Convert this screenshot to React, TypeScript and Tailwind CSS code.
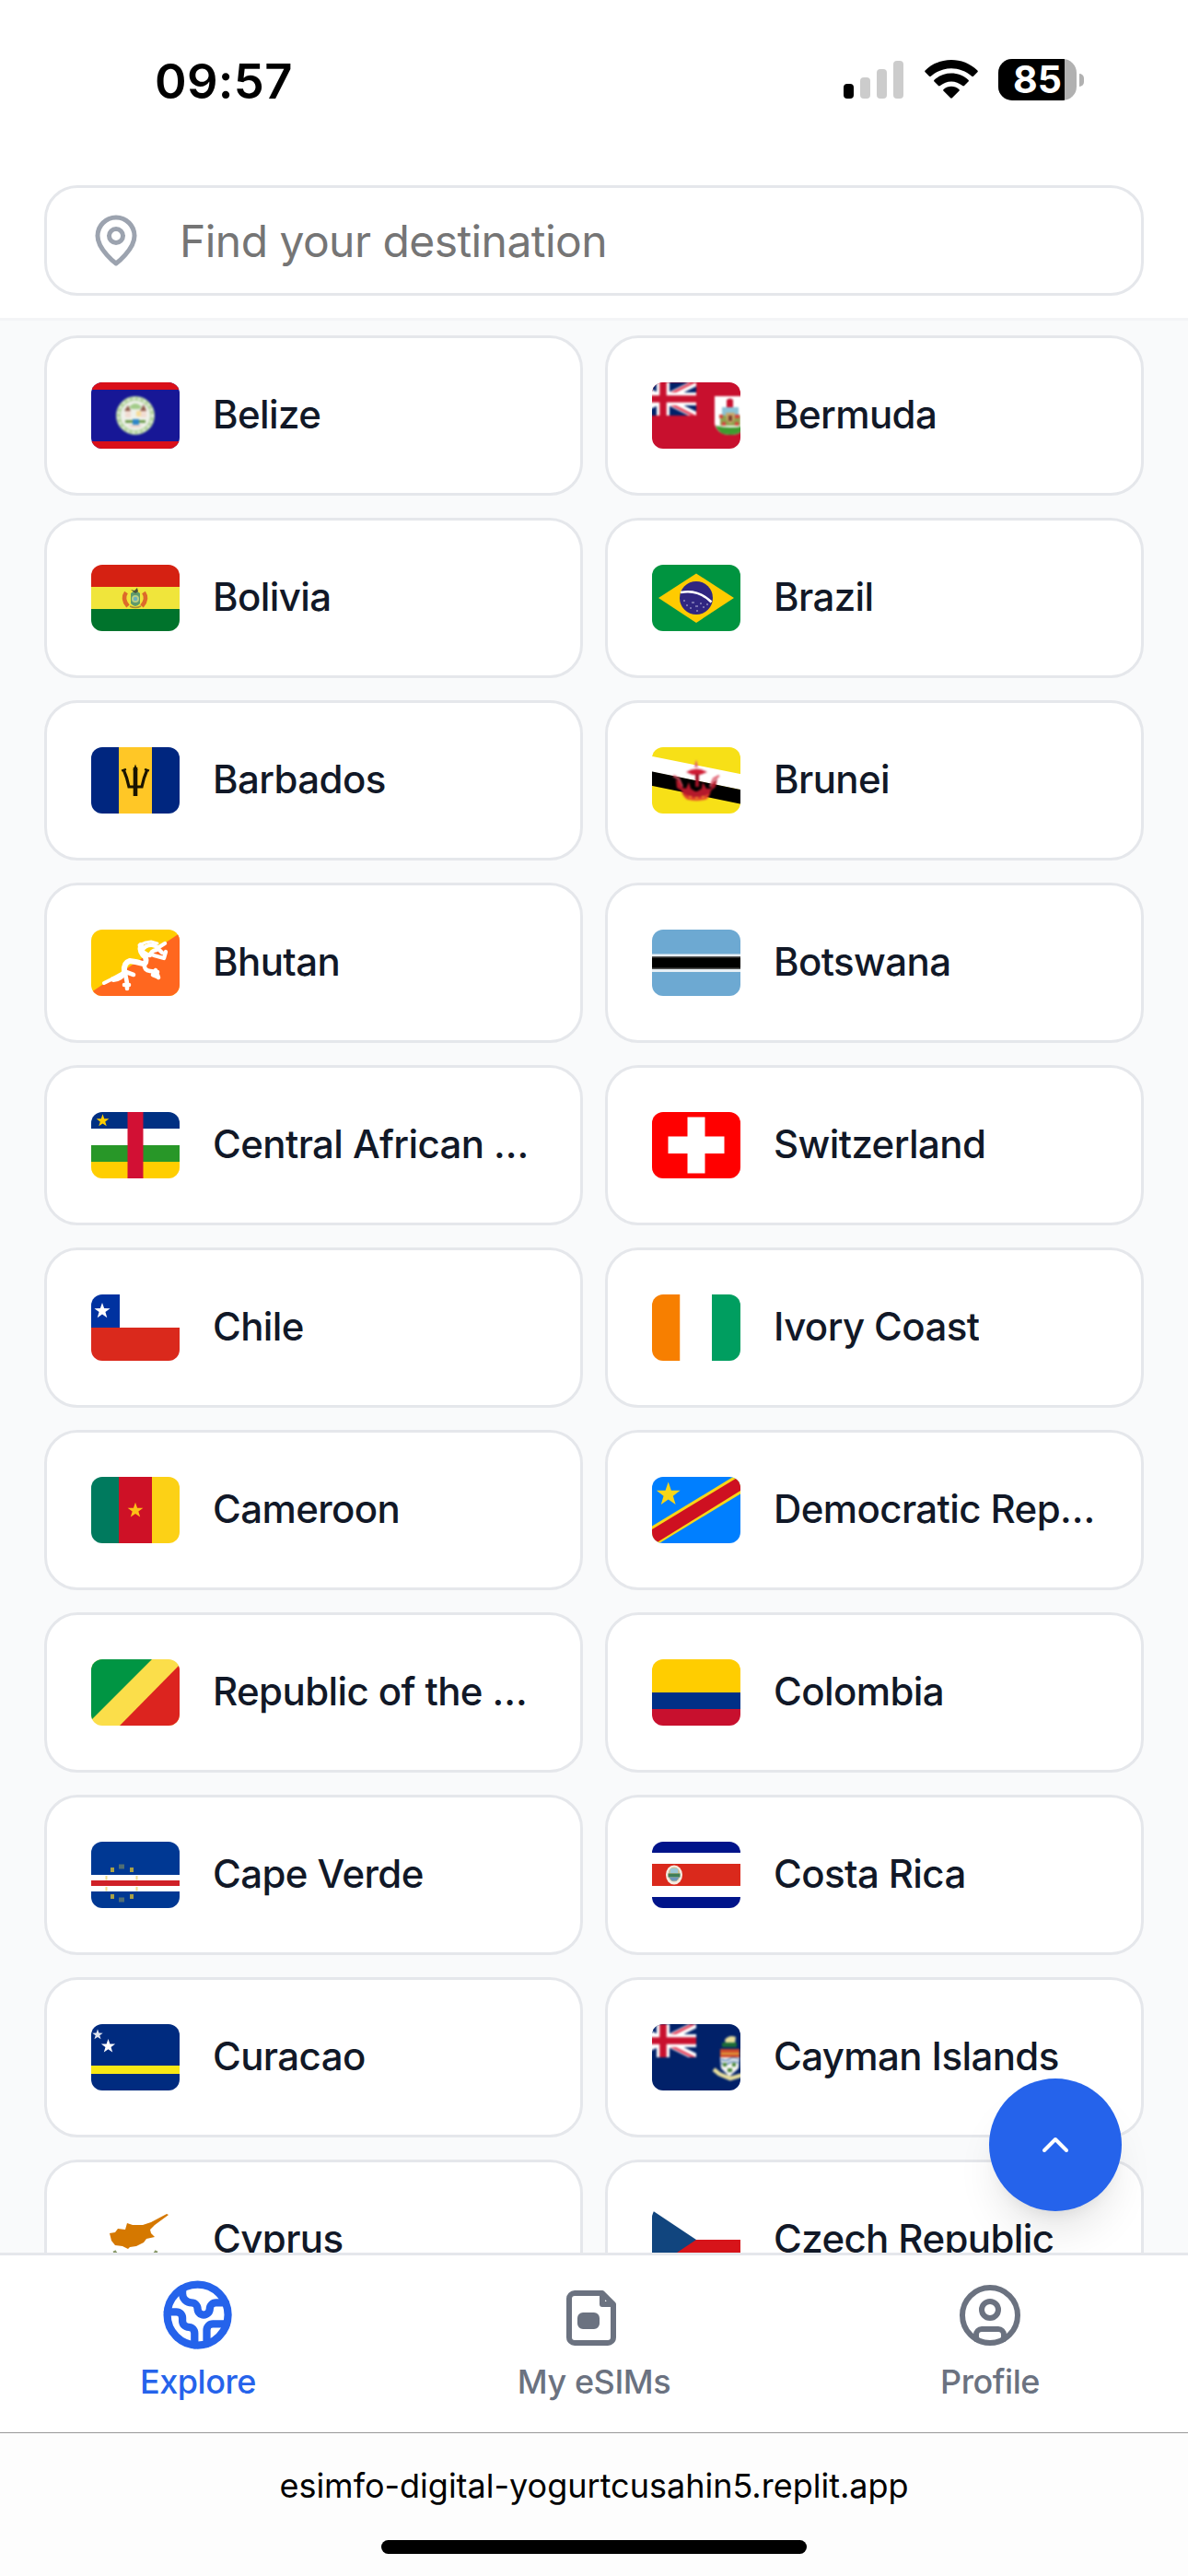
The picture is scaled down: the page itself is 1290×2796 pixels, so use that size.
import type { ReactNode } from "react";
import { ChevronUp, CircleUser, Earth } from "lucide-react";

function starPoints(cx: number, cy: number, r: number) {
  const pts: string[] = [];
  for (let i = 0; i < 10; i++) {
    const rad = i % 2 === 0 ? r : r * 0.4;
    const a = (Math.PI / 5) * i - Math.PI / 2;
    pts.push(`${(cx + rad * Math.cos(a)).toFixed(2)},${(cy + rad * Math.sin(a)).toFixed(2)}`);
  }
  return pts.join(" ");
}

function Star({ cx, cy, r, fill }: { cx: number; cy: number; r: number; fill: string }) {
  return <polygon points={starPoints(cx, cy, r)} fill={fill} className="blur-[0.5px]" />;
}

/* Horizontal or vertical bands: [start, size, colour] */
function Bands({ items, vertical }: { items: [number, number, string][]; vertical?: boolean }) {
  return (
    <>
      {items.map(([start, size, fill], i) =>
        vertical ? (
          <rect key={i} x={start} y={0} width={size} height={72} fill={fill} />
        ) : (
          <rect key={i} x={0} y={start} width={96} height={size} fill={fill} />
        ),
      )}
    </>
  );
}

function UnionJack() {
  return (
    <svg x={-24} y={0} width={72} height={36} viewBox="0 0 72 36">
      <rect width={72} height={36} fill="#012169" />
      <path d="M0 0 72 36M72 0 0 36" stroke="#fff" strokeWidth={7.5} />
      <path d="M36 19.5 72 37.5M36 16.5 72 -1.5" stroke="#e4405a" strokeWidth={2.8} />
      <path d="M36 0V36M0 18H72" stroke="#fff" strokeWidth={14} />
      <path d="M36 0V36M0 18H72" stroke="#c8102e" strokeWidth={7.5} />
    </svg>
  );
}

const flags: Record<string, ReactNode> = {
  bz: (
    <>
      <Bands items={[[0, 72, "#171796"], [0, 8, "#d90f19"], [64, 8, "#d90f19"]]} />
      <g className="blur-[0.8px]">
        <circle cx={48} cy={36} r={18.5} fill="#eef1ea" stroke="#b5d3a0" strokeWidth={5} />
        <circle cx={48} cy={36} r={18.5} fill="none" stroke="#e6efe0" strokeWidth={3} strokeDasharray="2 4" />
        <path d="M41 27q7-8 14 0l-3 2h-8z" fill="#a3cc8a" />
        <path d="M36 31l4-6 3 6zM53 31l4-7 3 7z" fill="#8d5a4a" />
        <path d="M37 31h6v7h-6zM54 31h6v7h-6z" fill="#f1dcd2" />
        <path d="M49 31h5v6h-5z" fill="#f7dc9a" />
        <path d="M37 41h22v3H37z" fill="#6f9c4e" />
        <path d="M45 40h7v6h-7z" fill="#2d86c9" />
        <path d="M40 46h16l-4 3h-8z" fill="#e8d3cb" />
      </g>
    </>
  ),
  bm: (
    <>
      <rect width={96} height={72} fill="#c8102e" />
      <g className="blur-[0.8px]">
        <UnionJack />
        <path d="M68 15h34v30q-3 12-17 12t-17-12z" fill="#fff" />
        <path d="M69 47q16 4 32 0-3 10-16 10t-16-10z" fill="#3f9a2f" />
        <path d="M81 19q4-3 7 0v8h-7z" fill="#c8102e" />
        <path d="M76 27h18v10H76z" fill="#8cc3d6" />
        <path d="M74 36h22v11H74z" fill="#8fa24d" />
        <path d="M73 35h4v4h-4zM90 35h5v4h-5zM76 43h4v4h-4zM90 43h4v4h-4z" fill="#d3473f" />
        <path d="M80 33h10l-1 8-4 4-4-4z" fill="#c9a86a" />
        <path d="M83 36h4v6h-4z" fill="#7b3f2d" />
      </g>
    </>
  ),
  bo: (
    <>
      <Bands items={[[0, 24, "#d52112"], [24, 24, "#f0e53b"], [48, 24, "#00732c"]]} />
      <g className="blur-[0.7px]">
        <path d="M38 30q-5 7 2 15M57 30q5 7-2 15" fill="none" stroke="#dd6a2a" strokeWidth={4.5} />
        <path d="M43 31q5-5 10 0v11q-5 6-10 0z" fill="#5f9a6c" />
        <circle cx={48} cy={37} r={4} fill="#b9cf86" />
        <circle cx={48} cy={37} r={2.2} fill="#6bb0bb" />
        <path d="M43 27l4 1 3-3 1 4-3 2z" fill="#4d5238" />
        <path d="M42 45q6 3 12 0" stroke="#a78f35" strokeWidth={1.6} fill="none" />
      </g>
    </>
  ),
  br: (
    <>
      <rect width={96} height={72} fill="#009440" />
      <path d="M7 36 48 9.5 89 36 48 63z" fill="#ffcb00" className="blur-[0.4px]" />
      <g className="blur-[0.5px]">
        <circle cx={48} cy={36} r={18} fill="#302681" />
        <path d="M31 30q19-4 33.5 10.5" fill="none" stroke="#fff" strokeWidth={2.5} />
        <path d="M34 39h2M37 44h2M43 41h3M47 45h3M52 42h2M55 46h2M48 50h2M59 43h2M41 47h2" stroke="#8f89bd" strokeWidth={1.6} />
      </g>
    </>
  ),
  bb: (
    <>
      <Bands vertical items={[[0, 30, "#00267f"], [30, 36, "#ffc726"], [66, 30, "#00267f"]]} />
      <g className="blur-[0.6px]" fill="none" stroke="#1a1400">
        <path d="M48 22V53" strokeWidth={4.6} />
        <path d="M35 24q4 9 6 19H55q2-10 6-19" strokeWidth={3.2} />
        <path d="M33 25.5 38 24M63 25.5 58 24" strokeWidth={2} />
        <path d="M48 18.5 45.5 25h5z" fill="#1a1400" stroke="none" />
      </g>
    </>
  ),
  bn: (
    <>
      <rect width={96} height={72} fill="#f7e017" />
      <g className="blur-[0.6px]">
        <path d="M-2 9.600 98 29.400V46.400L-2 26.600z" fill="#fff" />
        <path d="M-2 26.100 98 46.400V61.900L-2 41.600z" fill="#000" />
      </g>
      <g className="blur-[0.8px]">
        <path d="M48 13.500l2 8h-4z" fill="#e0576a" />
        <path d="M37 27q11-7 23 0l-8 3h-8z" fill="#cf1b33" />
        <path d="M47 29h4v14h-4z" fill="#a01226" />
        <path d="M23 31l6 3 4 9M73 31l-6 3-4 9" fill="none" stroke="#e0576a" strokeWidth={2} />
        <path d="M26 34l5 5 2 5 4 1 3-7 2 7 5 3h2l5-3 1-7 4 7 5 0 2-6 5-6-2 10-5 4q-2 9-8 10H40q-6-2-8-10l-5-3z" fill="#b5192b" />
        <path d="M34 50q14 9 29 0l-3 6q-12 4-23 0z" fill="#e5432c" />
        <path d="M40 54h3M47 55h3M54 54h3" stroke="#f08b2a" strokeWidth={2} />
      </g>
    </>
  ),
  bt: (
    <>
      <rect width={96} height={72} fill="#ffcd00" />
      <path d="M0 68 96 4V72H0z" fill="#ff671f" />
      <g className="blur-[0.7px]" fill="none" stroke="#fff" strokeLinecap="round" strokeLinejoin="round">
        <path d="M14 58 24 53 33 48" strokeWidth={4} />
        <path d="M24 54q9-1 12-8-1-10 6-12 8 1 14 3 5 0 3-7-7-6-5-13" strokeWidth={6} />
        <path d="M38 46l8 3M37 48l2 10M36 60h5M39 62v2" strokeWidth={4.6} />
        <path d="M58 38q-1 6 6 7l8 1M70 44l3 8M67 49l5 2" strokeWidth={4.6} />
        <path d="M55 23q4-7 12-6 6 1 4 5-6 1-7 6-3 0-9-5M72 20l8-5M68 28l11 3 2-7M77 25l-3-3" strokeWidth={4.4} />
        <path d="M52 17l7-3 6-1 7 2" strokeWidth={3} />
      </g>
    </>
  ),
  bw: <Bands items={[[0, 72, "#6da9d2"], [26.5, 19.5, "#e6eef4"], [29, 14, "#555"], [30.5, 11, "#000"]]} />,
  cf: (
    <>
      <Bands items={[[0, 18, "#003082"], [18, 18, "#fff"], [36, 18, "#289728"], [54, 18, "#ffce00"]]} />
      <rect x={39.5} y={-4} width={17} height={80} fill="#d21034" className="blur-[0.5px]" />
      <Star cx={12.5} cy={9.5} r={7.2} fill="#ffce00" />
    </>
  ),
  ch: (
    <>
      <rect width={96} height={72} fill="#f00" />
      <path d="M38.5 5.5h19v21H78.5V45H57.5V66.5h-19V45H17.5V26.5h21z" fill="#fff" className="blur-[0.7px]" />
    </>
  ),
  cl: (
    <>
      <Bands items={[[0, 36, "#fff"], [36, 36, "#da291c"]]} />
      <rect width={31} height={36} fill="#0032a0" />
      <Star cx={12} cy={18} r={9} fill="#fff" />
    </>
  ),
  ci: <Bands vertical items={[[0, 30.5, "#f77f00"], [30.5, 34.5, "#fff"], [65, 31, "#009e60"]]} />,
  cm: (
    <>
      <Bands vertical items={[[0, 30, "#007a5e"], [30, 36, "#ce1126"], [66, 30, "#fcd116"]]} />
      <Star cx={48} cy={36.5} r={8.8} fill="#fcc016" />
    </>
  ),
  cd: (
    <>
      <rect width={96} height={72} fill="#007fff" />
      <path d="M0 53.5 88 0H96V18.5L8 72H0z" fill="#f7d618" className="blur-[0.5px]" />
      <path d="M0 57 94 0H96V15L4 72H0z" fill="#ce1021" />
      <Star cx={17.7} cy={19} r={13.5} fill="#f7d618" />
    </>
  ),
  cg: (
    <>
      <rect width={96} height={72} fill="#fbde4a" />
      <path d="M0 0H66L0 66z" fill="#009543" />
      <path d="M96 6V72H31z" fill="#dc241f" />
    </>
  ),
  co: <Bands items={[[0, 36, "#ffcd00"], [36, 18, "#003087"], [54, 18, "#c8102e"]]} />,
  cv: (
    <>
      <Bands items={[[0, 72, "#003893"], [36, 18, "#fff"], [42, 6, "#cf2027"]]} />
      <g className="blur-[0.5px]" fill="#a8a046">
        <path d="M30 24.5h6v5h-6zM30 60.5h6v5h-6z" fill="#4f6d74" />
        <path d="M21 28h4v5h-4zM42 28h4v5h-4zM21 57h4v5h-4zM42 57h4v5h-4z" />
        <path d="M15.5 37h2v4.500h-2zM15.5 49h2v4.500h-2zM48.5 37h2v4.500h-2zM48.5 49h2v4.500h-2z" fill="#f3dc8c" />
      </g>
    </>
  ),
  cr: (
    <>
      <Bands items={[[0, 12, "#00148a"], [12, 12, "#fff"], [24, 24, "#da291c"], [48, 12, "#fff"], [60, 12, "#00148a"]]} />
      <g className="blur-[0.6px]">
        <ellipse cx={24} cy={36} rx={9} ry={10.5} fill="#f5ece2" />
        <ellipse cx={24} cy={35.5} rx={6.5} ry={8} fill="#c9c096" />
        <path d="M20 29h8v5h-8z" fill="#9cc7d6" />
        <path d="M17.5 34.5h13v4h-13z" fill="#3f7f55" />
        <path d="M18.5 38.5h11l-3 4h-5z" fill="#6c95b8" />
      </g>
    </>
  ),
  cw: (
    <>
      <Bands items={[[0, 72, "#002b7f"], [45, 9, "#f9e814"]]} />
      <Star cx={7} cy={11.5} r={6} fill="#dfe4ef" />
      <Star cx={18.5} cy={24} r={8} fill="#fff" />
    </>
  ),
  ky: (
    <>
      <rect width={96} height={72} fill="#012169" />
      <g className="blur-[0.8px]">
        <UnionJack />
        <path d="M79 17q5-6 12-3l-1 7H80z" fill="#e8df9a" />
        <path d="M76 20h16v5H76z" fill="#1c6b39" />
        <path d="M74 27h21v9H74z" fill="#cf4a2b" />
        <path d="M75 31h20v2H75z" fill="#e0a33c" />
        <path d="M74 36h21l-1 12-10 9-9-9z" fill="#f4f4f2" />
        <path d="M75 38q5 3 9 0t10 0M75 42q5 3 9 0t10 0" fill="none" stroke="#5b86b8" strokeWidth={1.6} />
        <path d="M77 42h4v4h-4zM87 42h4v4h-4zM82 48h5v4h-5z" fill="#4d8a3d" />
        <path d="M67 49l6 5 12 5 14-4" fill="none" stroke="#e6dd9c" strokeWidth={4.5} />
      </g>
    </>
  ),
  cy: (
    <>
      <rect width={96} height={72} fill="#fff" />
      <path
        d="M20 29l6-1 3-4 8 1 2-7 6 2h11l9-3 17-9 2 1-15 11-5 5 1 4 4 4-9 2-3 4-8 4-7 1-2 2-6-3-8-1-4-5z"
        fill="#d57800"
        className="blur-[0.6px]"
      />
      <path d="M25 48q8 14 22 12M71 48q-8 14-22 12" fill="none" stroke="#8a9a6a" strokeWidth={3.5} />
    </>
  ),
  cz: (
    <>
      <Bands items={[[0, 36, "#fff"], [36, 36, "#d7141a"]]} />
      <path d="M-6 0 48 36-6 72z" fill="#11457e" />
    </>
  ),
};

const countries: [string, string][] = [
  ["bz", "Belize"],
  ["bm", "Bermuda"],
  ["bo", "Bolivia"],
  ["br", "Brazil"],
  ["bb", "Barbados"],
  ["bn", "Brunei"],
  ["bt", "Bhutan"],
  ["bw", "Botswana"],
  ["cf", "Central African Republic"],
  ["ch", "Switzerland"],
  ["cl", "Chile"],
  ["ci", "Ivory Coast"],
  ["cm", "Cameroon"],
  ["cd", "Democratic Republic of the Congo"],
  ["cg", "Republic of the Congo"],
  ["co", "Colombia"],
  ["cv", "Cape Verde"],
  ["cr", "Costa Rica"],
  ["cw", "Curacao"],
  ["ky", "Cayman Islands"],
  ["cy", "Cyprus"],
  ["cz", "Czech Republic"],
];

function CountryCard({ code, name }: { code: string; name: string }) {
  return (
    <button className="flex h-[174px] min-w-0 items-center gap-9 rounded-[36px] border-[3px] border-[#e5e7eb] bg-white px-12 text-left">
      <span className="h-[72px] w-24 shrink-0 overflow-hidden rounded-[12px]">
        <svg viewBox="0 0 96 72" className="block h-full w-full">
          {flags[code]}
        </svg>
      </span>
      <span className="min-w-0 truncate pb-[3px] text-[42px] leading-[60px] font-medium tracking-[-0.6px] text-[#111827]">{name}</span>
    </button>
  );
}

function StatusBar() {
  return (
    <div className="flex h-[201px] items-start justify-between pr-[113px] pl-[168px]">
      <span className="pt-[56px] text-[52.5px] leading-[64px] font-semibold tracking-[0.3px] text-black">09:57</span>
      <div className="flex items-start pt-[64px]">
        <div className="mt-[2px] flex h-[41px] items-end gap-[7px]">
          <span className="h-4 w-[11px] rounded-[4px] bg-black" />
          <span className="h-[23px] w-[11px] rounded-[4px] bg-[#ccc]" />
          <span className="h-8 w-[11px] rounded-[4px] bg-[#ccc]" />
          <span className="h-[41px] w-[11px] rounded-[4px] bg-[#ccc]" />
        </div>
        <svg viewBox="0 0 58 42" className="mt-[1px] ml-[23px] h-[42px] w-[58px]" fill="#000">
          <path d="M.6 11.500C16.500-3.800 41.500-3.800 57.400 11.500q.8.900 0 1.800L53 17.700q-.9.800-1.800 0C38.500 6.300 19.500 6.300 6.800 17.700q-.9.800-1.800 0L.6 13.300q-.8-.9 0-1.800z" />
          <path d="M10.500 21.800c10.500-9.700 26.500-9.700 37 0q.9.900 0 1.800l-4.500 4.500q-.9.800-1.800 0c-7-6.300-17.400-6.300-24.400 0q-.9.800-1.800 0l-4.500-4.500q-.9-.9 0-1.800z" />
          <path d="M20.600 32c5-4.300 11.800-4.300 16.800 0q.9.900 0 1.800L29.900 41.300q-.9.800-1.800 0L20.600 33.800q-.9-.9 0-1.800z" />
        </svg>
        <div className="ml-[22px] flex items-center gap-[3px]">
          <div className="flex h-[45px] w-[85px] overflow-hidden rounded-[15px] bg-[#b1b1b1]">
            <span className="w-[72px] bg-black pr-[3px] text-right text-[41px] leading-[45px] font-bold text-white">85</span>
          </div>
          <span className="h-[14px] w-[5px] rounded-r-[7px] bg-[#b1b1b1]" />
        </div>
      </div>
    </div>
  );
}

function SearchField() {
  return (
    <div className="mx-12 flex h-[120px] items-center gap-[39px] rounded-[36px] border-[3px] border-[#e5e7eb] bg-white pl-[45px]">
      <svg viewBox="0 0 24 24" className="h-[60px] w-[60px] text-[#9ca3af]" fill="none" stroke="currentColor" strokeWidth={2} strokeLinecap="round" strokeLinejoin="round">
        <path d="M20 10c0 6-8 12-8 12s-8-6-8-12a8 8 0 0 1 16 0Z" />
        <circle cx={12} cy={10} r={3} />
      </svg>
      <span className="pt-[2px] text-[48px] leading-[72px] tracking-[-0.56px] text-[#757575]">Find your destination</span>
    </div>
  );
}

function SimIcon() {
  return (
    <svg viewBox="0 0 24 24" className="h-[72px] w-[72px]" fill="none" stroke="currentColor" strokeWidth={2} strokeLinejoin="round">
      <path d="M15 4H5a2 2 0 0 0-2 2v14a2 2 0 0 0 2 2h12a2 2 0 0 0 2-2V8z" />
      <path d="M15 4v4h4" />
      <rect x={7} y={12} width={6} height={4} rx={1} fill="currentColor" />
    </svg>
  );
}

function NavItem({ icon, label, active }: { icon: ReactNode; label: string; active?: boolean }) {
  return (
    <button className={active ? "flex flex-1 flex-col items-center text-[#2563eb]" : "flex flex-1 flex-col items-center text-[#6b7280]"}>
      <span className="flex h-[72px] items-center justify-center">{icon}</span>
      <span className="mt-3 text-[36px] leading-[48px] font-medium tracking-[-0.45px]">{label}</span>
    </button>
  );
}

export default function App() {
  return (
    <div className="relative flex h-[2796px] w-[1290px] flex-col overflow-hidden bg-[#f9fafb] font-['Inter',sans-serif]">
      <header className="flex h-[348px] shrink-0 flex-col border-b-[3px] border-[#f3f4f6] bg-white">
        <StatusBar />
        <SearchField />
      </header>

      <main className="min-h-0 flex-1 overflow-hidden px-12 pt-4">
        <div className="grid grid-cols-2 gap-6">
          {countries.map(([code, name]) => (
            <CountryCard key={code} code={code} name={name} />
          ))}
        </div>
      </main>

      <button className="absolute top-[2256px] left-[1074px] flex h-36 w-36 items-center justify-center rounded-full bg-[#2563eb] text-white shadow-[0_30px_45px_-9px_rgba(0,0,0,0.1),0_12px_18px_-12px_rgba(0,0,0,0.1)]">
        <ChevronUp size={48} strokeWidth={2} />
      </button>

      <nav className="relative flex h-[195px] shrink-0 border-t-[3px] border-[#e5e7eb] bg-white pt-[29px]">
        <NavItem active label="Explore" icon={<Earth size={79.2} strokeWidth={2.5} />} />
        <NavItem label="My eSIMs" icon={<SimIcon />} />
        <NavItem label="Profile" icon={<CircleUser size={72} strokeWidth={2} />} />
      </nav>

      <footer className="relative flex h-[156px] shrink-0 flex-col items-center border-t border-[#999] bg-[#fdfdfd]">
        <span className="mt-[33px] h-[48px] text-[36px] leading-[48px] text-black">esimfo-digital-yogurtcusahin5.replit.app</span>
        <span className="mt-[35px] h-[15px] w-[462px] rounded-full bg-black" />
      </footer>
    </div>
  );
}
